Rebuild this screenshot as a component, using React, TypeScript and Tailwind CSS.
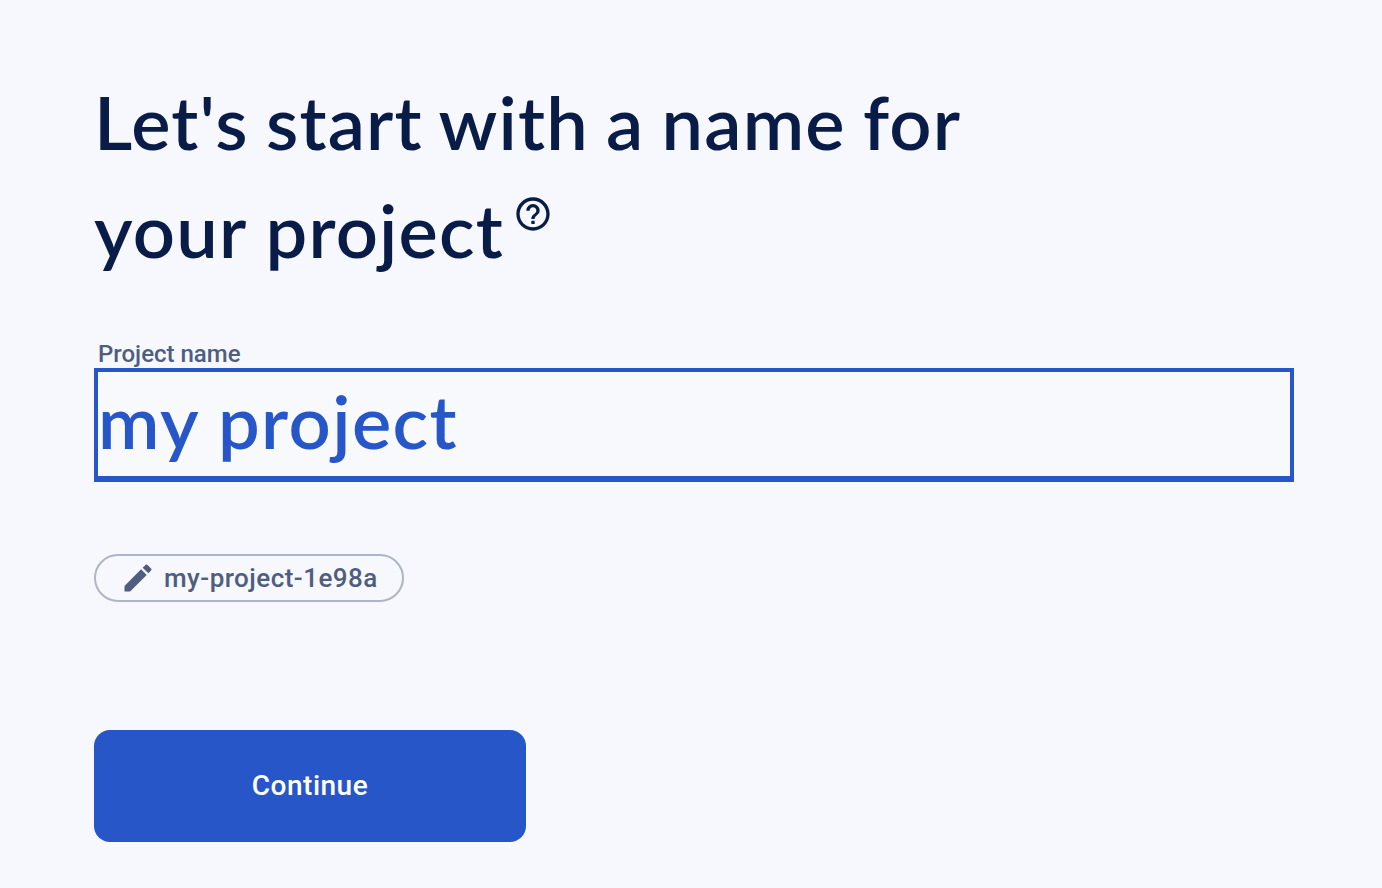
import { MdEdit, MdHelpOutline } from "react-icons/md";

export default function App() {
  return (
    <main className="flex min-h-screen flex-col items-start bg-[#f7f8fe] px-[94px] pt-[68px] font-['Roboto',sans-serif]">
      <h1 className="font-['Lato',sans-serif] text-[74px] font-semibold leading-[108px] text-[#091b47]">
        <span className="block whitespace-nowrap tracking-[1.2px] [word-spacing:-2.5px]">
          Let's start with a name for
        </span>
        <span className="flex items-start whitespace-nowrap tracking-[1.2px]">
          your project
          <MdHelpOutline className="ml-[8.5px] mt-[18px] size-10" />
        </span>
      </h1>
      <label
        htmlFor="project-name"
        className="ml-1 mt-14 text-[24px] font-medium leading-[28px] text-[#4e5d80]"
      >
        Project name
      </label>
      <input
        id="project-name"
        defaultValue="my project"
        className="h-[114px] w-[1200px] shrink-0 border-4 border-b-[6px] border-[#2756c9] bg-[#f7f9fd] pb-2 font-['Lato',sans-serif] text-[74px] font-semibold tracking-[1.4px] text-[#2756c9] outline-none"
      />
      <button className="mt-[72px] flex h-12 w-[310px] items-center rounded-full border-2 border-[#aeb5c9] pl-6 text-[26px] font-medium tracking-[0.47px] text-[#4e5d80]">
        <MdEdit className="mr-2 size-9" />
        <span className="whitespace-nowrap">my-project-1e98a</span>
      </button>
      <button className="mt-32 h-28 w-[432px] rounded-2xl bg-[#2756c9] text-[28px] font-medium tracking-[0.5px] text-white">
        Continue
      </button>
    </main>
  );
}
